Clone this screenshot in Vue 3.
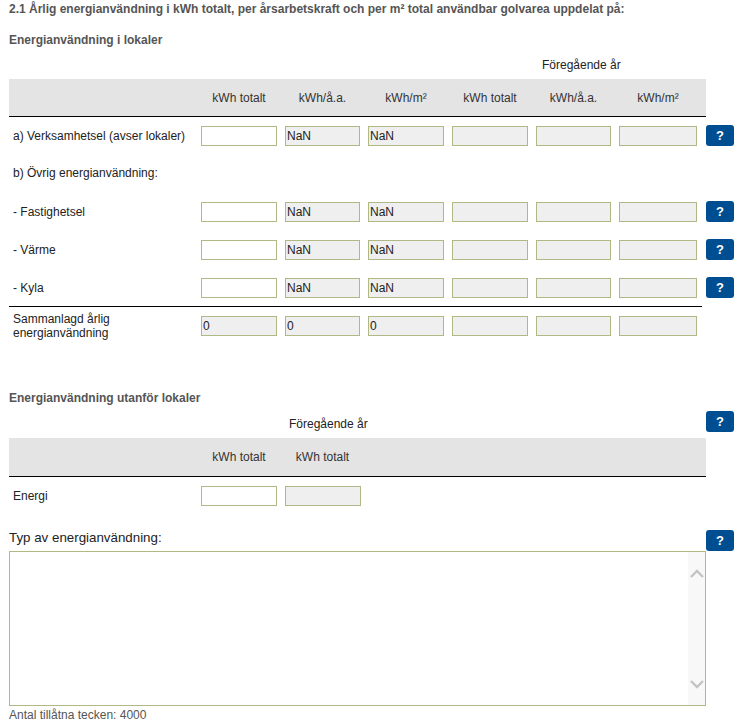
<template>
  <div class="page">
    <h2 class="title">2.1 Årlig energianvändning i kWh totalt, per årsarbetskraft och per m² total användbar golvarea uppdelat på:</h2>
    <h3 class="sub first">Energianvändning i lokaler</h3>

    <div class="prev-row grid">
      <span class="prev prev-wide">Föregående år</span>
    </div>
    <div class="band grid">
      <span></span>
      <span v-for="(h, i) in heads" :key="i" class="head">{{ h }}</span>
    </div>

    <div v-for="row in rows" :key="row.label" class="row grid" :class="{ 'no-fields': !row.fields, last: row.last }">
      <span class="label">{{ row.label }}</span>
      <template v-if="row.fields">
        <input type="text" class="field open" />
        <input v-for="n in 2" :key="n" type="text" class="field" value="NaN" readonly />
        <input v-for="n in 3" :key="'p' + n" type="text" class="field" readonly />
        <button class="help">?</button>
      </template>
    </div>
    <div class="line"></div>
    <div class="row sum grid">
      <span class="label">Sammanlagd årlig energianvändning</span>
      <input v-for="n in 3" :key="n" type="text" class="field" value="0" readonly />
      <input v-for="n in 3" :key="'p' + n" type="text" class="field" readonly />
    </div>

    <h3 class="sub second">Energianvändning utanför lokaler</h3>
    <div class="prev-row grid short">
      <span class="prev prev-narrow">Föregående år</span>
      <button class="help help-top">?</button>
    </div>
    <div class="band band2 grid">
      <span></span>
      <span class="head">kWh totalt</span>
      <span class="head">kWh totalt</span>
    </div>
    <div class="row energy grid">
      <span class="label">Energi</span>
      <input type="text" class="field open" />
      <input type="text" class="field wide" readonly />
    </div>

    <div class="type-head">
      <span>Typ av energianvändning:</span>
      <button class="help">?</button>
    </div>
    <div class="text-wrap">
      <textarea class="text"></textarea>
      <div class="scroll">
        <svg viewBox="0 0 14 10" width="14" height="10"><path d="M1 8 L7 2 L13 8" fill="none" stroke="#c4c4c4" stroke-width="2.4" /></svg>
        <svg viewBox="0 0 14 10" width="14" height="10"><path d="M1 2 L7 8 L13 2" fill="none" stroke="#c4c4c4" stroke-width="2.4" /></svg>
      </div>
    </div>
    <div class="count">Antal tillåtna tecken: 4000</div>
  </div>
</template>

<script setup>
const heads = ['kWh totalt', 'kWh/å.a.', 'kWh/m²', 'kWh totalt', 'kWh/å.a.', 'kWh/m²']

const rows = [
  { label: 'a) Verksamhetsel (avser lokaler)', fields: true },
  { label: 'b) Övrig energianvändning:', fields: false },
  { label: '- Fastighetsel', fields: true },
  { label: '- Värme', fields: true },
  { label: '- Kyla', fields: true, last: true }
]
</script>

<style scoped>
.page {
  width: 743px;
  height: 725px;
  overflow: hidden;
  box-sizing: border-box;
  padding: 2px 0 0 9px;
  font-family: "Liberation Sans", Arial, sans-serif;
  font-size: 12px;
  color: #222;
}

.title {
  margin: 0;
  font-size: 12px;
  line-height: 14px;
  font-weight: bold;
  color: #555;
  white-space: nowrap;
}

.sub {
  margin: 0;
  font-size: 12px;
  line-height: 14px;
  font-weight: bold;
  color: #555;
}

.sub.first {
  margin-top: 17px;
}

.sub.second {
  margin-top: 55px;
}

.grid {
  display: grid;
  grid-template-columns: 184px 76px 75px 76px 76px 75px 78px 28px;
  column-gap: 8px;
  align-items: center;
}

.prev-row {
  height: 32px;
  align-items: end;
}

.prev-row.short {
  height: 33px;
  position: relative;
}

.prev {
  line-height: 14px;
  white-space: nowrap;
  margin-bottom: 7px;
}

.prev-wide {
  grid-column: 6;
  margin-left: 6px;
}

.prev-narrow {
  grid-column: 3;
  margin-left: 4px;
}

.band {
  width: 697px;
  height: 37px;
  background: #e4e4e4;
  border-bottom: 1px solid #000;
  color: #333;
  grid-template-columns: 184px 76px 75px 76px 76px 75px 78px;
}

.band2 {
  height: 38px;
}

.head {
  text-align: center;
}

.row {
  padding-top: 9px;
  height: 20px;
  padding-bottom: 9px;
}

.row.last {
  padding-bottom: 8px;
}

.row.no-fields .label {
  margin-top: -2px;
  display: block;
}

.label {
  padding-left: 4px;
  line-height: 14px;
}

.line {
  width: 693px;
  border-top: 1px solid #000;
}

.sum {
  padding-bottom: 0;
  grid-template-rows: 20px;
}

.energy {
  padding-bottom: 0;
}

.field {
  box-sizing: border-box;
  width: 100%;
  height: 20px;
  margin: 0;
  padding: 0 1px;
  border: 1px solid #b0b985;
  border-radius: 0;
  background: #efefef;
  font-family: inherit;
  font-size: 12px;
  color: #222;
  outline: none;
}

.field.open {
  background: #fff;
}

.field.wide {
  width: 76px;
}

.help {
  width: 28px;
  height: 21px;
  margin: -1px 0 0 1px;
  padding: 0;
  border: none;
  border-radius: 3px;
  background: #004e92;
  color: #fff;
  font-family: inherit;
  font-size: 13px;
  font-weight: bold;
  line-height: 21px;
}

.help-top {
  position: absolute;
  left: 697px;
  top: 6px;
  margin: 0;
}

.type-head {
  position: relative;
  margin-top: 24px;
  height: 21px;
  width: 725px;
  font-size: 13.33px;
  line-height: 15px;
  color: #222;
}

.type-head .help {
  position: absolute;
  left: 697px;
  top: 0;
  margin: 0;
}

.type-head span {
  display: block;
}

.text-wrap {
  position: relative;
  width: 697px;
  height: 155px;
}

.text {
  display: block;
  box-sizing: border-box;
  width: 100%;
  height: 100%;
  margin: 0;
  padding: 2px;
  border: 1px solid #b0b985;
  border-radius: 0;
  resize: none;
  outline: none;
  overflow: hidden;
}

.scroll {
  position: absolute;
  right: 1px;
  top: 1px;
  bottom: 1px;
  width: 17px;
  padding: 17px 0 16px;
  box-sizing: border-box;
  background: #f8f8f8;
  display: flex;
  flex-direction: column;
  justify-content: space-between;
  align-items: center;
}

.count {
  margin-top: 2px;
  line-height: 14px;
  color: #555;
}
</style>
